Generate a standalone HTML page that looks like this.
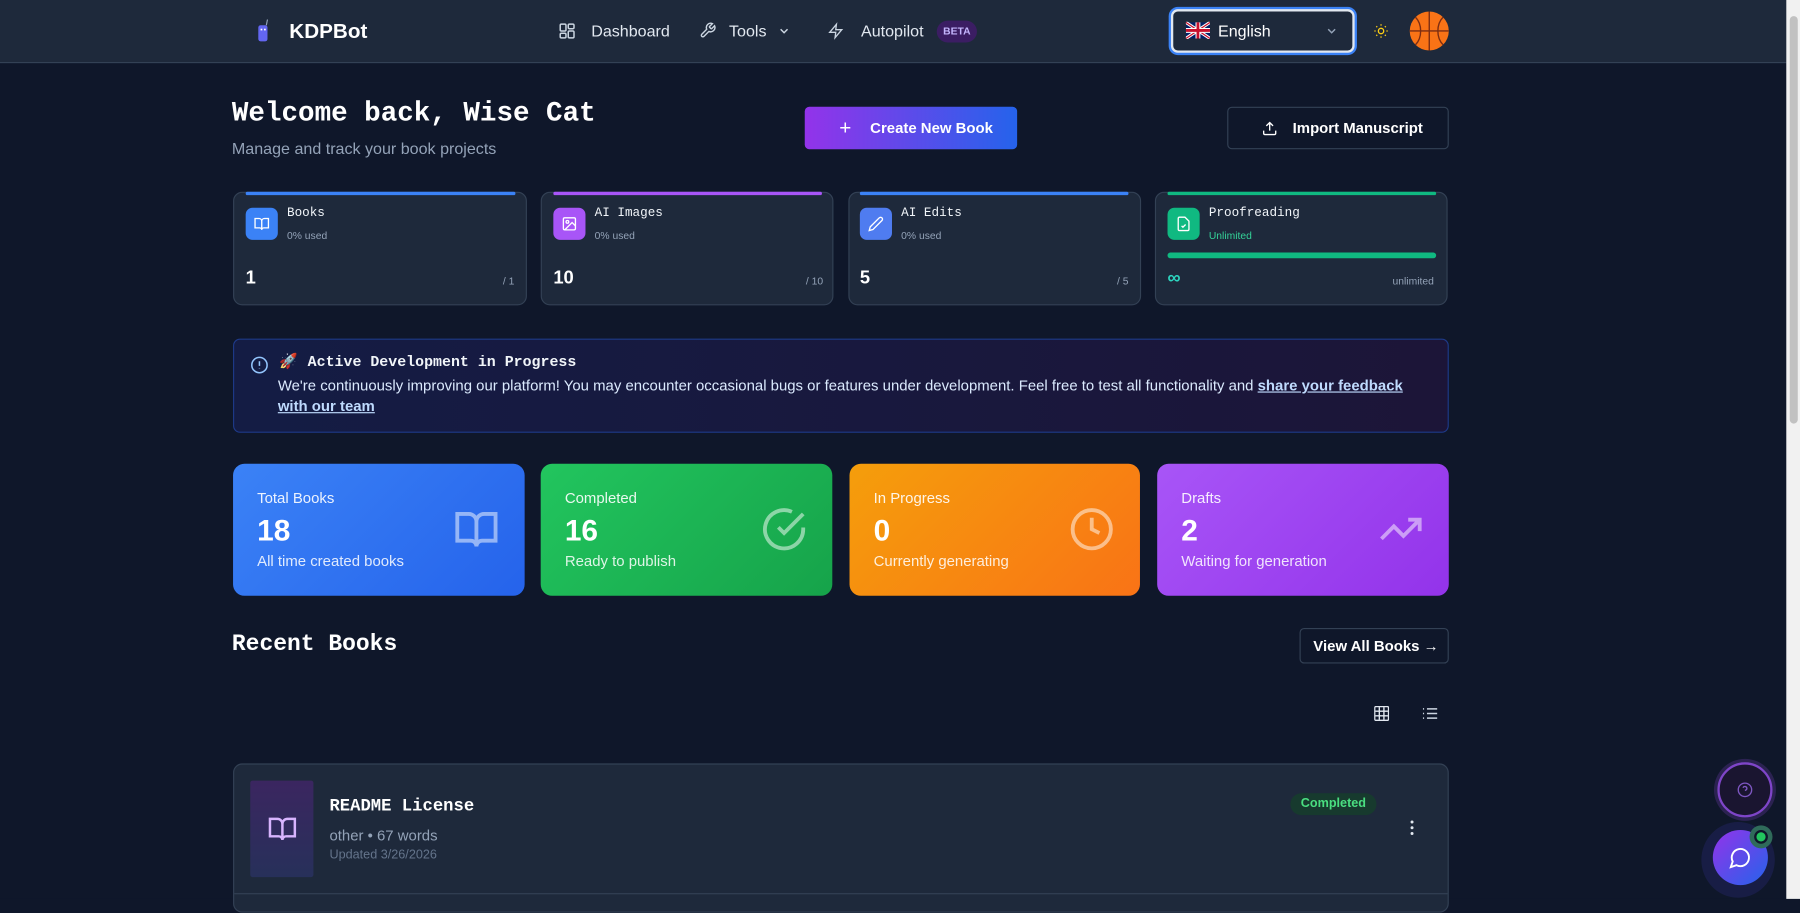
<!DOCTYPE html>
<html><head><meta charset="utf-8"><style>
*{box-sizing:border-box;margin:0;padding:0}
html,body{width:1800px;height:898px;overflow:hidden;background:#0f172a}
#w{position:absolute;left:0;top:0;width:1568px;height:783px;transform:scale(1.148);transform-origin:0 0;font-family:"Liberation Sans",sans-serif;color:#fff;background:#0f172a}
.a{position:absolute}
.mono{font-family:"Liberation Mono","DejaVu Sans Mono",monospace}
.nav{left:0;top:0;width:1556px;height:55px;background:#1e293b;border-bottom:1px solid #334155}
.navt{font-size:14px;color:#e2e8f0}
.card{background:#1e293b;border:1px solid #334155;border-radius:8px}
.bar{height:3px;border-radius:2px}
.ico{width:28px;height:28px;border-radius:6px;display:flex;align-items:center;justify-content:center}
.lab{font-size:11px;color:#f1f5f9}
.sub{font-size:9px;color:#94a3b8}
.num{font-size:16px;font-weight:bold}
.lim{font-size:9px;color:#94a3b8}
.stat{border-radius:10px;height:115px;top:404px}
.stat .l{position:absolute;left:21px;top:22px;font-size:13px;color:rgba(255,255,255,.9)}
.stat .n{position:absolute;left:21px;top:43px;font-size:26px;font-weight:bold}
.stat .s{position:absolute;left:21px;top:77px;font-size:13px;color:rgba(255,255,255,.85)}
.stat svg{position:absolute;right:22px;top:37px;opacity:.5}
</style></head><body><div id="w">
<div class="a nav"></div>
<svg class="a" style="left:222px;top:16px" width="14" height="22" viewBox="0 0 14 22"><rect x="3" y="6" width="8" height="14" rx="2" fill="#6366f1"/><rect x="5" y="9" width="1.5" height="1.5" fill="#fff"/><rect x="8" y="9" width="1.5" height="1.5" fill="#fff"/><line x1="10" y1="6" x2="11" y2="1" stroke="#94a3b8"/></svg>
<div class="a" style="left:252px;top:17px;font-size:18px;font-weight:bold">KDPBot</div>
<svg class="a" style="left:487px;top:20px" width="14" height="14" viewBox="0 0 14 14" fill="none" stroke="#cbd5e1" stroke-width="1.3"><rect x="1" y="1" width="5" height="6" rx="1"/><rect x="8" y="1" width="5" height="4" rx="1"/><rect x="8" y="7" width="5" height="6" rx="1"/><rect x="1" y="9" width="5" height="4" rx="1"/></svg>
<div class="a navt" style="left:515px;top:19px">Dashboard</div>
<svg class="a" style="left:609px;top:19px" width="15" height="15" viewBox="0 0 24 24" fill="none" stroke="#cbd5e1" stroke-width="2"><path d="M14.7 6.3a1 1 0 000 1.4l1.6 1.6a1 1 0 001.4 0l3.8-3.8a6 6 0 01-7.9 7.9l-6.9 6.9a2.1 2.1 0 01-3-3l6.9-6.9a6 6 0 017.9-7.9z"/></svg>
<div class="a navt" style="left:635px;top:19px">Tools</div>
<svg class="a" style="left:678px;top:22px" width="10" height="10" viewBox="0 0 10 10" fill="none" stroke="#cbd5e1" stroke-width="1.3"><path d="M2 3.5l3 3 3-3"/></svg>
<svg class="a" style="left:721px;top:19px" width="14" height="16" viewBox="0 0 24 24" fill="none" stroke="#cbd5e1" stroke-width="2"><path d="M13 2L3 14h9l-1 8 10-12h-9l1-8z"/></svg>
<div class="a navt" style="left:750px;top:19px">Autopilot</div>
<div class="a" style="left:816px;top:18px;width:35px;height:19px;border-radius:10px;background:#3b1d63;color:#c4b5fd;font-size:9px;font-weight:bold;text-align:center;line-height:19px">BETA</div>
<div class="a" style="left:1020px;top:8px;width:160px;height:38px;border:2px solid #e2e8f0;border-radius:6px;box-shadow:0 0 0 2px #3b82f6;background:#1e293b"></div>
<svg class="a" style="left:1033px;top:19px" width="21" height="15" viewBox="0 0 60 40"><rect width="60" height="40" fill="#012169"/><path d="M0 0L60 40M60 0L0 40" stroke="#fff" stroke-width="8"/><path d="M0 0L60 40M60 0L0 40" stroke="#c8102e" stroke-width="3"/><path d="M30 0v40M0 20h60" stroke="#fff" stroke-width="12"/><path d="M30 0v40M0 20h60" stroke="#c8102e" stroke-width="7"/></svg>
<div class="a navt" style="left:1061px;top:19px;color:#fff">English</div>
<svg class="a" style="left:1155px;top:22px" width="10" height="10" viewBox="0 0 10 10" fill="none" stroke="#94a3b8" stroke-width="1.3"><path d="M2 3.5l3 3 3-3"/></svg>
<svg class="a" style="left:1196px;top:20px" width="14" height="14" viewBox="0 0 24 24" fill="none" stroke="#facc15" stroke-width="2"><circle cx="12" cy="12" r="4"/><path d="M12 2v2M12 20v2M2 12h2M20 12h2M4.9 4.9l1.4 1.4M17.7 17.7l1.4 1.4M4.9 19.1l1.4-1.4M17.7 6.3l1.4-1.4"/></svg>
<svg class="a" style="left:1227px;top:9px" width="36" height="36" viewBox="0 0 36 36"><circle cx="18" cy="18" r="17" fill="#f97316"/><path d="M1 18h34M18 1v34M6 6c6 6 6 18 0 24M30 6c-6 6-6 18 0 24" stroke="#7c2d12" stroke-width="1.2" fill="none"/></svg>
<div class="a" style="left:1556px;top:0;width:12px;height:783px;background:#f1f1f1"></div>
<div class="a" style="left:1559px;top:14px;width:7px;height:355px;background:#c1c1c1;border-radius:4px"></div>

<div class="a mono" style="left:202px;top:86px;font-size:24px;font-weight:bold">Welcome back, Wise Cat</div>
<div class="a" style="left:202px;top:121px;font-size:14px;color:#94a3b8">Manage and track your book projects</div>
<div class="a" style="left:701px;top:93px;width:185px;height:37px;border-radius:4px;background:linear-gradient(90deg,#9333ea,#2563eb);font-size:13px;font-weight:bold;line-height:37px"><span style="position:absolute;left:30px;font-size:18px;font-weight:normal">+</span><span style="position:absolute;left:57px">Create New Book</span></div>
<div class="a" style="left:1069px;top:93px;width:193px;height:37px;border-radius:4px;border:1px solid #334155;font-size:13px;font-weight:bold;line-height:35px"><svg style="position:absolute;left:29px;top:11px" width="14" height="14" viewBox="0 0 24 24" fill="none" stroke="#fff" stroke-width="2"><path d="M21 15v4a2 2 0 01-2 2H5a2 2 0 01-2-2v-4M17 8l-5-5-5 5M12 3v12"/></svg><span style="position:absolute;left:56px">Import Manuscript</span></div>

<!-- usage cards -->
<div class="a card" style="left:203px;top:167px;width:256px;height:99px"></div>
<div class="a bar" style="left:214px;top:167px;width:235px;background:#3b82f6"></div>
<div class="a ico" style="left:214px;top:181px;background:#3b82f6"><svg width="14" height="14" viewBox="0 0 24 24" fill="none" stroke="#fff" stroke-width="2"><path d="M2 4h6a4 4 0 014 4v13a3 3 0 00-3-3H2zM22 4h-6a4 4 0 00-4 4v13a3 3 0 013-3h7z"/></svg></div>
<div class="a lab mono" style="left:250px;top:180px">Books</div><div class="a sub" style="left:250px;top:200px">0% used</div>
<div class="a num" style="left:214px;top:234px">1</div><div class="a lim" style="left:438px;top:240px">/ 1</div>

<div class="a card" style="left:471px;top:167px;width:255px;height:99px"></div>
<div class="a bar" style="left:482px;top:167px;width:234px;background:#a855f7"></div>
<div class="a ico" style="left:482px;top:181px;background:#a855f7"><svg width="14" height="14" viewBox="0 0 24 24" fill="none" stroke="#fff" stroke-width="2"><rect x="3" y="3" width="18" height="18" rx="2"/><circle cx="9" cy="9" r="2"/><path d="M21 15l-5-5L5 21"/></svg></div>
<div class="a lab mono" style="left:518px;top:180px">AI Images</div><div class="a sub" style="left:518px;top:200px">0% used</div>
<div class="a num" style="left:482px;top:234px">10</div><div class="a lim" style="left:702px;top:240px">/ 10</div>

<div class="a card" style="left:739px;top:167px;width:255px;height:99px"></div>
<div class="a bar" style="left:749px;top:167px;width:234px;background:#3b82f6"></div>
<div class="a ico" style="left:749px;top:181px;background:#4f7cf0"><svg width="14" height="14" viewBox="0 0 24 24" fill="none" stroke="#fff" stroke-width="2"><path d="M17 3a2.8 2.8 0 114 4L7.5 20.5 2 22l1.5-5.5z"/></svg></div>
<div class="a lab mono" style="left:785px;top:180px">AI Edits</div><div class="a sub" style="left:785px;top:200px">0% used</div>
<div class="a num" style="left:749px;top:234px">5</div><div class="a lim" style="left:973px;top:240px">/ 5</div>

<div class="a card" style="left:1006px;top:167px;width:255px;height:99px"></div>
<div class="a bar" style="left:1017px;top:167px;width:234px;background:#10b981"></div>
<div class="a ico" style="left:1017px;top:181px;background:#10b981"><svg width="14" height="14" viewBox="0 0 24 24" fill="none" stroke="#fff" stroke-width="2"><path d="M14 2H6a2 2 0 00-2 2v16a2 2 0 002 2h12a2 2 0 002-2V8z"/><path d="M9 15l2 2 4-4"/></svg></div>
<div class="a lab mono" style="left:1053px;top:180px">Proofreading</div><div class="a" style="left:1053px;top:200px;font-size:9px;color:#34d399">Unlimited</div>
<div class="a" style="left:1017px;top:220px;width:234px;height:5px;border-radius:3px;background:#10b981"></div>
<div class="a" style="left:1017px;top:234px;font-size:16px;font-weight:bold;color:#2dd4bf">∞</div><div class="a lim" style="left:1213px;top:240px">unlimited</div>

<!-- alert -->
<div class="a" style="left:203px;top:295px;width:1059px;height:82px;border:1px solid #1e3a8a;border-radius:6px;background:linear-gradient(90deg,#141c44,#1c1538)"></div>
<svg class="a" style="left:218px;top:310px" width="16" height="16" viewBox="0 0 24 24" fill="none" stroke="#93c5fd" stroke-width="2"><circle cx="12" cy="12" r="10"/><path d="M12 7v6M12 16.5v.5"/></svg>
<div class="a" style="left:243px;top:307px;font-size:13px">🚀</div>
<div class="a mono" style="left:268px;top:308px;font-size:13px;font-weight:bold;color:#f1f5f9">Active Development in Progress</div>
<div class="a" style="left:242px;top:327px;width:1000px;font-size:13px;line-height:18px;color:#dbeafe">We're continuously improving our platform! You may encounter occasional bugs or features under development. Feel free to test all functionality and <u style="font-weight:bold;color:#bfdbfe">share your feedback with our team</u></div>

<!-- stats -->
<div class="a stat" style="left:203px;width:254px;background:linear-gradient(135deg,#3b82f6,#2563eb)"><div class="l">Total Books</div><div class="n">18</div><div class="s">All time created books</div><svg width="40" height="40" viewBox="0 0 24 24" fill="none" stroke="#fff" stroke-width="2"><path d="M2 4h6a4 4 0 014 4v13a3 3 0 00-3-3H2zM22 4h-6a4 4 0 00-4 4v13a3 3 0 013-3h7z"/></svg></div>
<div class="a stat" style="left:471px;width:254px;background:linear-gradient(135deg,#22c55e,#16a34a)"><div class="l">Completed</div><div class="n">16</div><div class="s">Ready to publish</div><svg width="40" height="40" viewBox="0 0 24 24" fill="none" stroke="#fff" stroke-width="2"><path d="M22 11.1V12a10 10 0 11-5.9-9.1"/><path d="M22 4L12 14l-3-3"/></svg></div>
<div class="a stat" style="left:740px;width:253px;background:linear-gradient(135deg,#f59e0b,#f97316)"><div class="l">In Progress</div><div class="n">0</div><div class="s">Currently generating</div><svg width="40" height="40" viewBox="0 0 24 24" fill="none" stroke="#fff" stroke-width="2"><circle cx="12" cy="12" r="10"/><path d="M12 6v6l4 2"/></svg></div>
<div class="a stat" style="left:1008px;width:254px;background:linear-gradient(135deg,#a855f7,#9333ea)"><div class="l">Drafts</div><div class="n">2</div><div class="s">Waiting for generation</div><svg width="40" height="40" viewBox="0 0 24 24" fill="none" stroke="#fff" stroke-width="2"><path d="M22 7l-8.5 8.5-5-5L2 17M16 7h6v6"/></svg></div>

<div class="a mono" style="left:202px;top:550px;font-size:20px;font-weight:bold">Recent Books</div>
<div class="a" style="left:1132px;top:547px;width:130px;height:31px;border:1px solid #334155;border-radius:4px;font-size:13px;font-weight:bold;line-height:29px;padding-left:11px">View All Books <span style="font-weight:normal">→</span></div>
<svg class="a" style="left:1197px;top:615px" width="13" height="13" viewBox="0 0 13 13" fill="none" stroke="#e2e8f0" stroke-width="1.2"><rect x="0.5" y="0.5" width="12" height="12" rx="1"/><path d="M4.5 1v11M8.5 1v11M1 4.5h11M1 8.5h11"/></svg>
<svg class="a" style="left:1239px;top:615px" width="13" height="13" viewBox="0 0 13 13" fill="none" stroke="#cbd5e1" stroke-width="1.3"><path d="M4 2.5h9M4 6.5h9M4 10.5h9M0.5 2.5h1M0.5 6.5h1M0.5 10.5h1"/></svg>

<div class="a card" style="left:203px;top:665px;width:1059px;height:130px"></div>
<div class="a" style="left:218px;top:680px;width:55px;height:84px;border-radius:2px;background:linear-gradient(180deg,#3b2660,#27305a)"></div>
<svg class="a" style="left:233px;top:709px" width="26" height="26" viewBox="0 0 24 24" fill="none" stroke="#d8b4fe" stroke-width="2"><path d="M2 4h6a4 4 0 014 4v13a3 3 0 00-3-3H2zM22 4h-6a4 4 0 00-4 4v13a3 3 0 013-3h7z"/></svg>
<div class="a mono" style="left:287px;top:694px;font-size:15px;font-weight:bold">README License</div>
<div class="a" style="left:287px;top:720px;font-size:13px;color:#94a3b8">other • 67 words</div>
<div class="a" style="left:287px;top:739px;font-size:11px;color:#64748b">Updated 3/26/2026</div>
<div class="a" style="left:1124px;top:691px;width:75px;height:19px;border-radius:10px;background:#173a2e;color:#4ade80;font-size:11px;font-weight:bold;text-align:center;line-height:19px">Completed</div>
<svg class="a" style="left:1227px;top:714px" width="6" height="14" viewBox="0 0 6 14" fill="#e2e8f0"><circle cx="3" cy="2" r="1.3"/><circle cx="3" cy="7" r="1.3"/><circle cx="3" cy="12" r="1.3"/></svg>
<div class="a" style="left:204px;top:778px;width:1057px;height:1px;background:#334155"></div>

<div class="a" style="left:1496px;top:664px;width:48px;height:48px;border-radius:50%;border:2px solid #7e45c8;background:#1a1530;box-shadow:0 0 0 3px rgba(126,69,200,.25)"></div>
<svg class="a" style="left:1513px;top:681px" width="14" height="14" viewBox="0 0 24 24" fill="none" stroke="#7e57c2" stroke-width="2"><circle cx="12" cy="12" r="10"/><path d="M9.1 9a3 3 0 015.8 1c0 2-3 3-3 3M12 17h.01"/></svg>
<div class="a" style="left:1482px;top:716px;width:64px;height:66px;border-radius:50%;background:rgba(79,70,229,.15)"></div>
<div class="a" style="left:1492px;top:723px;width:48px;height:48px;border-radius:50%;background:linear-gradient(135deg,#9333ea,#2563eb)"></div>
<svg class="a" style="left:1506px;top:737px" width="20" height="20" viewBox="0 0 24 24" fill="none" stroke="#fff" stroke-width="2"><path d="M7.9 20A9 9 0 104 16.1L2 22z"/></svg>
<div class="a" style="left:1524px;top:719px;width:20px;height:20px;border-radius:50%;background:#2f6b5a"></div>
<div class="a" style="left:1528px;top:723px;width:12px;height:12px;border-radius:50%;background:#22c55e;border:2px solid #0f172a"></div>
</div></body></html>
